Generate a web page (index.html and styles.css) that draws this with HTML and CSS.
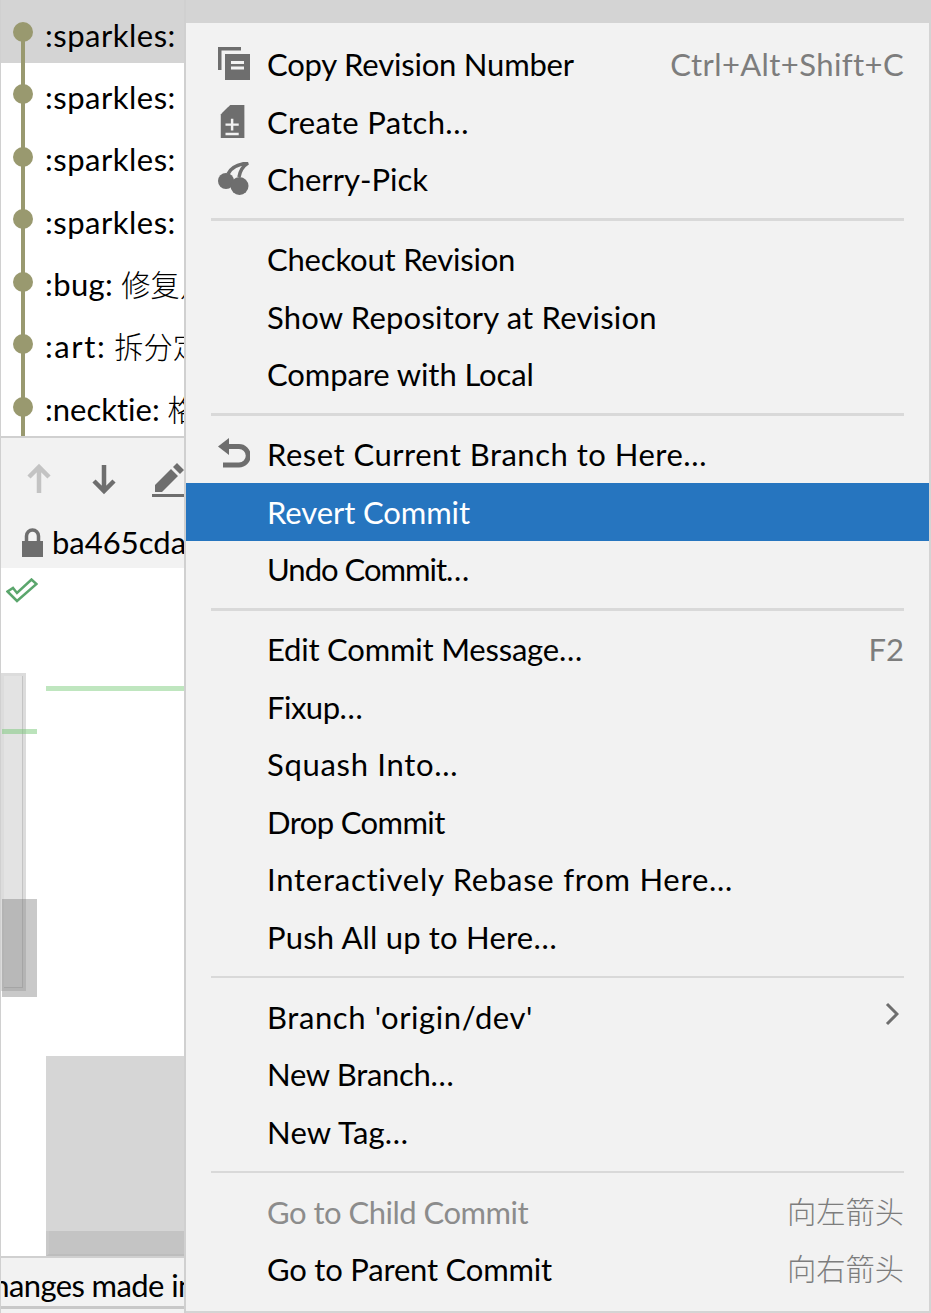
FILE: index.html
```html
<!DOCTYPE html>
<html lang="en">
<head>
<meta charset="utf-8">
<title>Git log context menu</title>
<link rel="stylesheet" href="styles.css">
</head>
<body>
<div class="screen">
  <section class="panel">
    <div class="log">
      <div class="graph-line"></div>
      <div class="commit selected"><span class="dot"></span><span class="ls-p5">:sparkles:</span></div>
      <div class="commit"><span class="dot"></span><span class="ls-p5">:sparkles:</span></div>
      <div class="commit"><span class="dot"></span><span class="ls-p5">:sparkles:</span></div>
      <div class="commit"><span class="dot"></span><span class="ls-p5">:sparkles:</span></div>
      <div class="commit"><span class="dot"></span><span><span class="ls-p4">:bug:</span> <span class="cjk">修复点</span></span></div>
      <div class="commit"><span class="dot"></span><span><span class="ls-p16">:art:</span> <span class="cjk">拆分定</span></span></div>
      <div class="commit"><span class="dot"></span><span>:necktie: <span class="cjk">格式</span></span></div>
    </div>
    <div class="details">
      <div class="toolbar">
        <svg class="tool" viewBox="0 0 30 32"><path d="M15 30V4M5 14 15 4l10 10" fill="none" stroke="#c3c3c3" stroke-width="4.5"/></svg>
        <svg class="tool" viewBox="0 0 30 32"><path d="M15 2v26M5 18l10 10 10-10" fill="none" stroke="#6e6e6e" stroke-width="4.5"/></svg>
        <svg class="tool" viewBox="0 0 36 36"><path d="M3 24 19 8l7 7-16 16H3zM21 6l4-4 7 7-4 4z" fill="#6e6e6e"/><path d="M0 33h36v4H0z" fill="#6e6e6e"/></svg>
      </div>
      <div class="hash">
        <svg class="lock" viewBox="0 0 21 29"><path d="M0 13h21v16H0z" fill="#6e6e6e"/><path d="M4.500 14V8a6 6 0 0 1 12 0v6" fill="none" stroke="#6e6e6e" stroke-width="3.500"/></svg>
        <span>ba465cda</span>
      </div>
    </div>
    <div class="diff">
      <svg class="check" viewBox="0 0 32 26"><path d="M1.500 13.500 11 23 30.500 6 25.500 1.500 11 15 7 10z" fill="none" stroke="#5ba66d" stroke-width="2.500"/></svg>
      <div class="added-line"></div>
      <div class="empty-block"><div class="block-foot"></div></div>
      <div class="thumb"></div>
      <div class="marker-green"></div>
      <div class="marker-grey"></div>
    </div>
    <div class="status"><span>changes made in this</span></div>
  </section>

  <nav class="menu">
    <div class="item">
      <svg class="icon" viewBox="0 0 32 34"><path d="M0 0h23v3.500H3.500V23H0z" fill="#6e6e6e"/><path d="M7 7h25v26H7z" fill="#6e6e6e"/><path d="M13 14h13v3H13zM13 19.500h13v3H13z" fill="#f2f2f2"/></svg>
      <span class="label ls-n2">Copy Revision Number</span><span class="key ls-p4">Ctrl+Alt+Shift+C</span>
    </div>
    <div class="item">
      <svg class="icon" viewBox="0 0 32 36"><path d="M12 0h15v35H2V10z" fill="#6e6e6e"/><path d="M10 2v7H3z" fill="#6e6e6e"/><path d="M7 19.500h14v2.500H7zM12.700 14.500h2.600v12.500h-2.600zM7 29.500h14v2.500H7z" fill="#f2f2f2"/></svg>
      <span class="label ls-p3">Create Patch…</span>
    </div>
    <div class="item">
      <svg class="icon" viewBox="0 0 32 34"><circle cx="8" cy="19" r="8" fill="#6e6e6e"/><circle cx="21.500" cy="24" r="9" fill="#6e6e6e"/><path d="M10 12C13 5 21 2 30 1c-5 3-8 8-9 14" fill="none" stroke="#6e6e6e" stroke-width="3.500"/></svg>
      <span class="label">Cherry-Pick</span>
    </div>
    <div class="sep"></div>
    <div class="item"><span class="icon"></span><span class="label ls-n2">Checkout Revision</span></div>
    <div class="item"><span class="icon"></span><span class="label ls-p2">Show Repository at Revision</span></div>
    <div class="item"><span class="icon"></span><span class="label ls-n1">Compare with Local</span></div>
    <div class="sep"></div>
    <div class="item">
      <svg class="icon" viewBox="0 0 32 32"><path d="M11 0v17L0 8.500z" fill="#6e6e6e"/><path d="M9 8.500h12a8.500 8.500 0 0 1 0 18.500H5" fill="none" stroke="#6e6e6e" stroke-width="5"/></svg>
      <span class="label ls-p5">Reset Current Branch to Here…</span>
    </div>
    <div class="item active"><span class="icon"></span><span class="label ls-n1">Revert Commit</span></div>
    <div class="item"><span class="icon"></span><span class="label ls-n10">Undo Commit…</span></div>
    <div class="sep"></div>
    <div class="item"><span class="icon"></span><span class="label ls-n2">Edit Commit Message…</span><span class="key">F2</span></div>
    <div class="item"><span class="icon"></span><span class="label ls-n5">Fixup…</span></div>
    <div class="item"><span class="icon"></span><span class="label ls-p7">Squash Into…</span></div>
    <div class="item"><span class="icon"></span><span class="label ls-n6">Drop Commit</span></div>
    <div class="item"><span class="icon"></span><span class="label ls-p75">Interactively Rebase from Here…</span></div>
    <div class="item"><span class="icon"></span><span class="label ls-p2">Push All up to Here…</span></div>
    <div class="sep"></div>
    <div class="item"><span class="icon"></span><span class="label ls-p6">Branch 'origin/dev'</span>
      <svg class="chevron" viewBox="0 0 14 24"><path d="M2 2l10 10L2 22" fill="none" stroke="#6e6e6e" stroke-width="3"/></svg>
    </div>
    <div class="item"><span class="icon"></span><span class="label ls-n3">New Branch…</span></div>
    <div class="item"><span class="icon"></span><span class="label ls-p2">New Tag…</span></div>
    <div class="sep"></div>
    <div class="item disabled"><span class="icon"></span><span class="label ls-n5">Go to Child Commit</span><span class="key cjk">向左箭头</span></div>
    <div class="item"><span class="icon"></span><span class="label ls-n2">Go to Parent Commit</span><span class="key cjk">向右箭头</span></div>
  </nav>
</div>
</body>
</html>
```

FILE: styles.css
```css
* { box-sizing: border-box; }
html, body { margin: 0; padding: 0; }
body {
  width: 931px;
  height: 1313px;
  overflow: hidden;
  background: #d4d4d4;
  color: #000;
  font-family: "Lato", "Noto Sans CJK SC", sans-serif;
  font-size: 31px;
  line-height: 36px;
  font-variant-ligatures: none;
}
.screen { position: relative; width: 931px; height: 1313px; overflow: hidden; }

.ls-n10 { letter-spacing: -1px; }
.ls-n6 { letter-spacing: -.6px; }
.ls-n5 { letter-spacing: -.5px; }
.ls-n3 { letter-spacing: -.3px; }
.ls-n2 { letter-spacing: -.2px; }
.ls-n1 { letter-spacing: -.1px; }
.ls-p2 { letter-spacing: .2px; }
.ls-p3 { letter-spacing: .3px; }
.ls-p4 { letter-spacing: .4px; }
.ls-p5 { letter-spacing: .5px; }
.ls-p6 { letter-spacing: .6px; }
.ls-p7 { letter-spacing: .7px; }
.ls-p75 { letter-spacing: .75px; }
.ls-p16 { letter-spacing: 1.600px; }
.cjk { font-size: 29.250px; font-weight: 300; }

/* left panel */
.panel {
  display: flex;
  flex-direction: column;
  width: 186px;
  height: 1313px;
  background: #fff;
  border-left: 1px solid #d0d0d0;
  border-right: 2px solid #d0d0d0;
  overflow: hidden;
}
.log { position: relative; height: 436px; background: #fff; }
.graph-line { position: absolute; z-index: 1; left: 20px; top: 32px; bottom: 0; width: 4px; background: #99996f; }
.commit {
  position: relative;
  display: flex;
  align-items: center;
  height: 62.500px;
  padding-left: 44px;
  padding-top: 5px;
  white-space: nowrap;
  overflow: hidden;
}
.commit.selected {
  height: 63px;
  padding-top: 7px;
  background: #d4d4d4;
}
.dot {
  position: absolute;
  left: 12px;
  top: 21px;
  width: 20px;
  height: 20px;
  border-radius: 50%;
  background: #99996f;
  z-index: 2;
}
.commit.selected .dot { top: 22px; }
.details {
  height: 132px;
  background: #f2f2f2;
  border-top: 2px solid #d0d0d0;
}
.toolbar { display: flex; align-items: center; height: 81px; padding: 0 0 0 23px; gap: 35px; }
.tool { width: 30px; height: 32px; flex: none; }
.toolbar svg:last-child { width: 36px; height: 36px; margin-left: -2px; }
.hash { display: flex; align-items: center; gap: 9px; height: 46px; padding-left: 21px; white-space: nowrap; }
.lock { width: 21px; height: 29px; flex: none; }

.diff { position: relative; flex: 1; min-height: 0; background: #fff; }
.check { display: block; width: 32px; height: 26px; margin: 10px 0 0 5px; }
.added-line { height: 5px; margin: 82px 0 0 45px; background: #bfe6bf; }
.empty-block { position: relative; height: 200px; margin: 365px 0 0 45px; background: #d6d6d6; }
.block-foot { position: absolute; left: 0; right: 0; bottom: 0; height: 25px; background: #c4c4c4; border-left: 3px solid #c9c9c9; border-bottom: 2px solid #bdbdbd; }
.thumb {
  position: absolute;
  left: 0;
  top: 105px;
  width: 25px;
  height: 318px;
  background: #e3e3e3;
  border: 3px solid #dcdcdc;
  box-shadow: inset -1px 0 0 #c4c4c4, inset 0 -1px 0 #c4c4c4;
}
.marker-green { position: absolute; left: 1px; top: 161px; width: 35px; height: 5px; background: rgba(120, 200, 120, .5); }
.marker-grey { position: absolute; left: 1px; top: 331px; width: 35px; height: 98px; background: rgba(120, 120, 120, .4); }

.status {
  height: 57px;
  margin-left: -1px;
  background: #f2f2f2;
  border-top: 2px solid #d0d0d0;
  white-space: nowrap;
  overflow: hidden;
}
.status span { display: block; height: 48px; line-height: 54px; margin-left: -22px; letter-spacing: -.6px; }
.status::after { content: ""; display: block; height: 3px; background: #c8c8c8; }

/* popup menu */
.menu {
  position: absolute;
  left: 186px;
  top: 23px;
  width: 743px;
  height: 1288px;
  padding: 12.500px 0 0;
  background: #f2f2f2;
}
.item {
  display: flex;
  align-items: center;
  height: 57.500px;
  padding: 0 25px 0 32px;
  white-space: nowrap;
}
.icon { flex: none; width: 32px; height: 34px; margin-right: 17px; }
.label { flex: 1; }
.key { color: #7d7d7d; }
.item.active { background: #2675bf; color: #fff; }
.item.disabled .label { color: #8c8c8c; }
.chevron { width: 14px; height: 24px; flex: none; margin: -6px 5px 0 0; }
.sep { height: 2.500px; margin: 10px 25px; background: #d9d9d9; }
```
